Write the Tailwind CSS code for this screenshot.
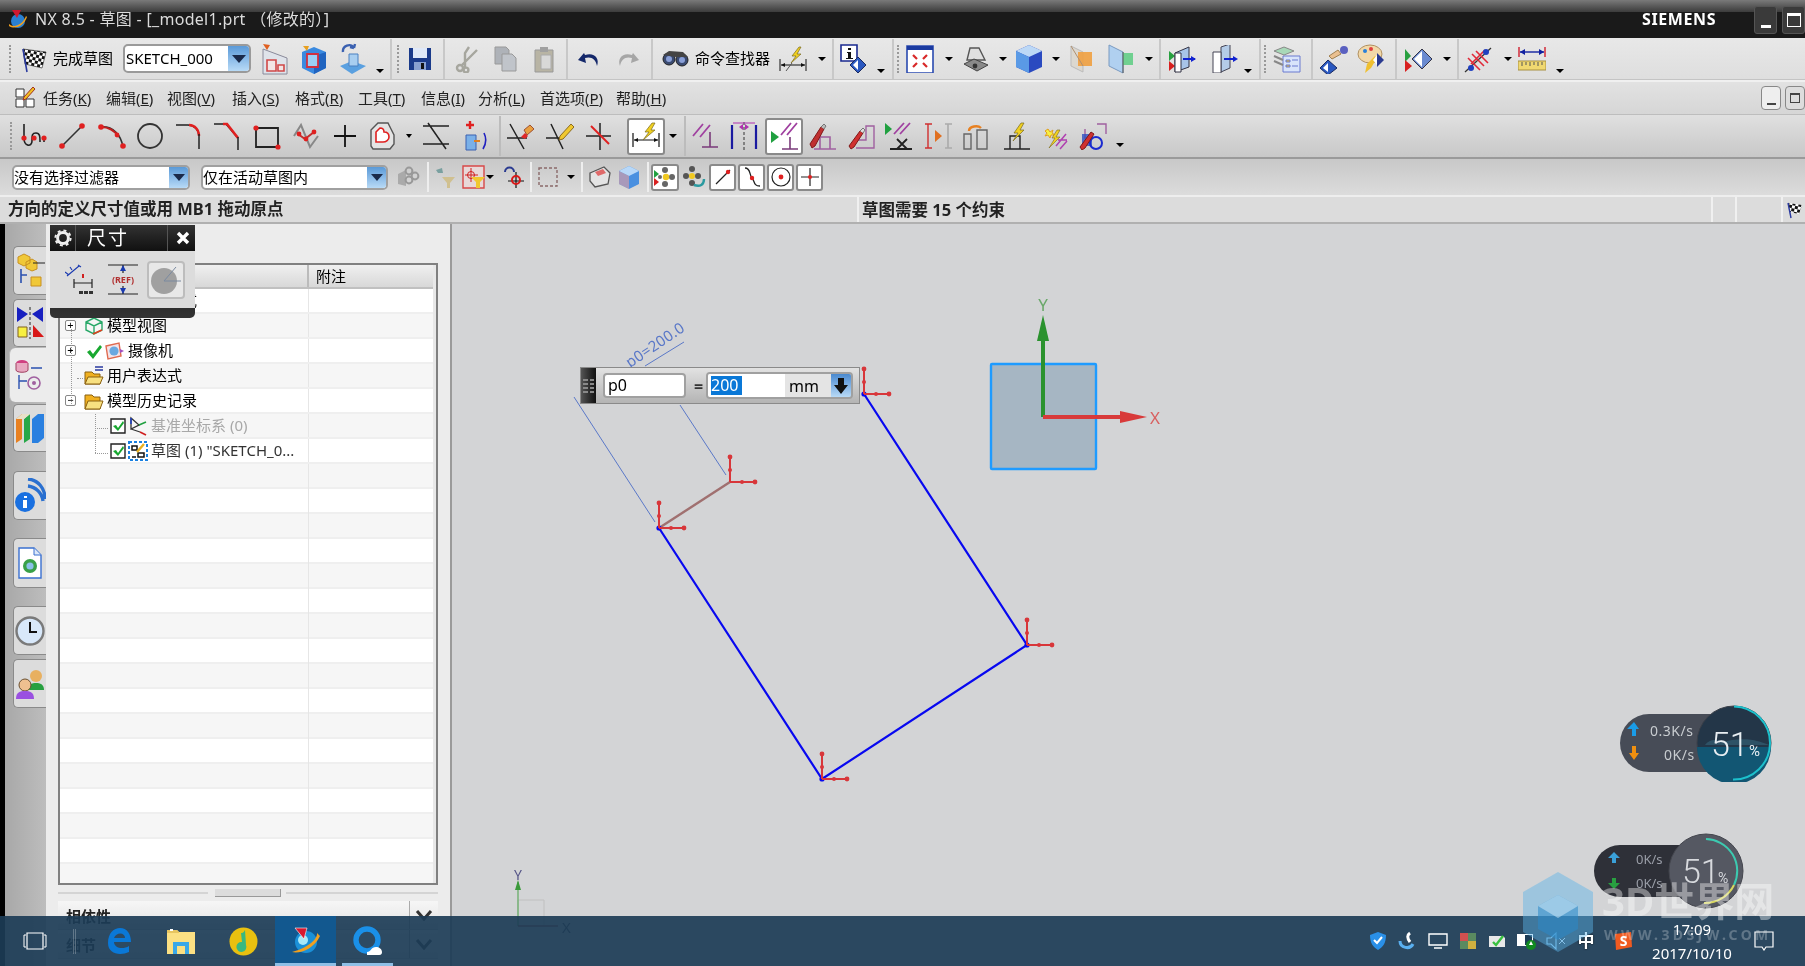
<!DOCTYPE html>
<html lang="zh">
<head>
<meta charset="UTF-8">
<title>NX 8.5 - 草图</title>
<script src="https://cdn.jsdelivr.net/npm/@tailwindcss/browser@4"></script>
</head>
<body class="m-0 overflow-hidden">
<div class="relative w-[1805px] h-[966px] overflow-hidden flex flex-col bg-[#d3d4d6] text-black blur-[0.5px] font-['Noto_Sans','Noto_Sans_CJK_SC',sans-serif]">

<svg class="absolute w-0 h-0">
  <defs>
    <pattern id="chk" width="6" height="6" patternUnits="userSpaceOnUse" patternTransform="rotate(12)">
      <rect width="6" height="6" fill="#fff"/><rect width="3" height="3" fill="#111"/><rect x="3" y="3" width="3" height="3" fill="#111"/>
    </pattern>
    <symbol id="mk" viewBox="0 -28 30 30" overflow="visible">
      <path d="M0 0V-25M0 0H25" stroke="#d8363a" stroke-width="2" fill="none"/>
      <circle cx="0" cy="-12" r="2" fill="#d8363a"/><circle cx="0" cy="-25" r="2.4" fill="#d8363a"/>
      <circle cx="12" cy="0" r="2" fill="#d8363a"/><circle cx="25" cy="0" r="2.4" fill="#d8363a"/>
    </symbol>
  </defs>
</svg>

<!-- title bar -->
<div class="h-[38px] shrink-0 flex flex-col bg-[#1a1a1a]">
  <div class="h-[12px] bg-gradient-to-b from-[#7a7a7a] to-[#3c3c3c]"></div>
</div>
<div class="absolute left-[8px] top-[6px] flex items-center h-[26px] text-[#dcdcdc] text-[16px] tracking-[0.3px]">
  <svg width="20" height="24" viewBox="0 0 20 24"><circle cx="10" cy="14" r="7" fill="#2a7fd0"/><path d="M1 17c4 4 13 2 17-8l1 1c-3 9-12 13-18 9z" fill="#f0a020"/><path d="M4 3h9l-4 8z" fill="#d01830"/></svg>
  <span class="ml-[7px]">NX 8.5 - 草图 - [_model1.prt （修改的）]</span>
</div>
<div class="absolute left-[1642px] top-[7px] text-white text-[16px] font-bold tracking-[0.6px]">SIEMENS</div>
<div class="absolute left-[1754px] top-[6px] flex gap-[5px]">
  <div class="w-[23px] h-[28px] rounded-[3px] border border-[#555] bg-[#3a3a3a] flex items-end justify-center pb-[5px]"><div class="w-[10px] h-[3px] bg-white"></div></div>
  <div class="w-[23px] h-[28px] rounded-[3px] border border-[#555] bg-[#3a3a3a] flex items-center justify-center"><div class="w-[14px] h-[14px] border border-t-[3px] border-white"></div></div>
</div>

<!-- toolbar 1 -->
<div class="h-[42px] shrink-0 flex items-center bg-gradient-to-b from-[#e8e8e8] to-[#dedede] border-b border-[#c4c4c4]">
  <div class="ml-[9px] w-[2px] h-[28px] border-l-2 border-dotted border-[#999]"></div>
  <svg class="ml-[9px]" width="28" height="28" viewBox="0 0 28 28"><path d="M3 4l23 3-4 16-17-4z" fill="url(#chk)" stroke="#222" stroke-width=".6"/><path d="M3 4l4 23" stroke="#2a3aa0" stroke-width="1.6"/></svg>
  <span class="ml-[5px] w-[60px] text-[15px] whitespace-nowrap">完成草图</span>
  <div class="ml-[10px] w-[128px] h-[29px] flex rounded-[5px] border-2 border-[#9a9a9a] bg-white overflow-hidden">
    <span class="flex-1 pl-[1px] text-[15px] leading-[25px]">SKETCH_000</span>
    <div class="w-[21px] bg-gradient-to-b from-[#5a9ad8] to-[#b8daf6] flex items-center justify-center"><div class="w-0 h-0 border-x-[7px] border-t-[8px] border-x-transparent border-t-[#1a2a4a]"></div></div>
  </div>
  <svg class="ml-[10px]" width="28" height="32" viewBox="0 0 28 32"><path d="M2 6l24 9v16H2z" fill="#dfe3ea" stroke="#8a8a9a"/><path d="M6 17h9v11H6zM17 22h6v6h-6z" fill="#f2e4e4" stroke="#d04848" stroke-width="1.6"/><path d="M2 1l7 1-3 5z" fill="#e06020"/></svg>
  <svg class="ml-[11px]" width="28" height="32" viewBox="0 0 28 32"><path d="M2 9l12-5 12 5v16l-12 6-12-6z" fill="#3a8ae0"/><path d="M14 13l12-4v16l-12 6z" fill="#2064c0"/><path d="M7 11h11v13H7z" fill="#9ad0f6" stroke="#d03040" stroke-width="1.8"/><path d="M3 3l6 0-2 5z" fill="#e8a020"/></svg>
  <svg class="ml-[11px]" width="28" height="32" viewBox="0 0 28 32"><path d="M1 23l12-5 14 5-14 8z" fill="#5aa0e0"/><path d="M10 11h9v12h-9z" fill="#a8cef0" stroke="#4a80c0"/><path d="M4 9a6 6 0 0111-4M15 5l-4-1M15 5l1-4" fill="none" stroke="#3a60b0" stroke-width="2.4"/></svg>
  <div class="ml-[9px] mt-[24px] w-0 h-0 border-x-[4px] border-t-[4px] border-x-transparent border-t-black"></div>
  <div class="ml-[6px] w-[2px] h-[40px] bg-[#c8c8c8]"></div>
  <div class="ml-[5px] w-[2px] h-[28px] border-l-2 border-dotted border-[#999]"></div>
  <svg class="ml-[7px]" width="28" height="28" viewBox="0 0 28 28"><path d="M3 3h22v22H3z" fill="#1a3a8a"/><path d="M7 3h14v10H7z" fill="#dfe8f8"/><path d="M8 17h12v8H8z" fill="#88a0d0"/><path d="M15 18h3v6h-3z" fill="#111"/></svg>
  <div class="ml-[9px] w-[2px] h-[40px] bg-[#c8c8c8]"></div>
  <svg class="ml-[7px]" width="28" height="28" viewBox="0 0 28 28"><g stroke="#a6a69e" fill="none" stroke-width="2.4"><circle cx="8" cy="23" r="3"/><circle cx="14" cy="25" r="2.4"/><path d="M10 20L25 5M13 22V8l4-6"/></g></svg>
  <svg class="ml-[11px]" width="28" height="28" viewBox="0 0 28 28"><path d="M4 2h11l3 3v14H4z" fill="#aeb2b8" stroke="#999"/><path d="M11 9h10l4 4v13H11z" fill="#c0c4ca" stroke="#999"/></svg>
  <svg class="ml-[11px]" width="28" height="28" viewBox="0 0 28 28"><path d="M5 5h18v22H5z" fill="#b8b4a4" stroke="#999"/><path d="M10 2h8v5h-8z" fill="#a0a0a0"/><path d="M11 10h10v14H11z" fill="#d8d8d8" stroke="#aaa"/></svg>
  <div class="ml-[8px] w-[2px] h-[40px] bg-[#c8c8c8]"></div>
  <svg class="ml-[7px]" width="28" height="28" viewBox="0 0 28 28"><path d="M9 8l-6 7 8 3-1-5c6-2 11 1 12 8 3-8-3-14-12-11z" fill="#14286a"/></svg>
  <svg class="ml-[11px]" width="28" height="28" viewBox="0 0 28 28"><path d="M19 8l6 7-8 3 1-5c-6-2-11 1-12 8-3-8 3-14 12-11z" fill="#a6a6a6"/></svg>
  <div class="ml-[9px] w-[2px] h-[40px] bg-[#c8c8c8]"></div>
  <svg class="ml-[8px]" width="28" height="28" viewBox="0 0 28 28"><circle cx="8" cy="14" r="6" fill="#3a4a70" stroke="#222"/><circle cx="21" cy="15" r="6" fill="#3a4a70" stroke="#222"/><circle cx="8" cy="14" r="3" fill="#8aa0d8"/><circle cx="21" cy="15" r="3" fill="#8aa0d8"/><path d="M2 10l6-4 14 1 5 5-12 0z" fill="#444"/></svg>
  <span class="ml-[6px] w-[75px] text-[15px] whitespace-nowrap">命令查找器</span>
  <svg class="ml-[9px]" width="28" height="28" viewBox="0 0 28 28"><path d="M1 14v12M27 14v12M2 20h24" stroke="#111" fill="none"/><path d="M2 20l4-2v4zM26 20l-4-2v4z" fill="#111"/><path d="M20 2l-7 9h4l-5 7 10-9h-4l4-7z" fill="#f0d020" stroke="#7a6a20" stroke-width=".7"/><path d="M13 18l-6 8" stroke="#555"/></svg>
  <div class="ml-[11px] w-0 h-0 border-x-[4px] border-t-[4px] border-x-transparent border-t-black"></div>
  <div class="ml-[6px] w-[2px] h-[40px] bg-[#c8c8c8]"></div>
  <svg class="ml-[6px]" width="28" height="32" viewBox="0 0 28 32"><path d="M1 2h16v16H1z" fill="#fff" stroke="#1a2a90" stroke-width="1.6"/><path d="M8 5h3v2H8zM7 9h4v6h2v1H6v-1h2v-5H7z" fill="#111"/><path d="M18 14l8 8-8 8-8-8z" fill="#2a58c0" stroke="#1a2a60"/><path d="M18 17v10l-5-5z" fill="#fff"/></svg>
  <div class="ml-[9px] mt-[24px] w-0 h-0 border-x-[4px] border-t-[4px] border-x-transparent border-t-black"></div>
  <div class="ml-[7px] w-[2px] h-[40px] bg-[#c8c8c8]"></div>
  <div class="ml-[3px] w-[2px] h-[28px] border-l-2 border-dotted border-[#999]"></div>
  <svg class="ml-[7px]" width="28" height="28" viewBox="0 0 28 28"><path d="M1 1h26v27H1z" fill="#fff" stroke="#2a4ab0" stroke-width="1.6"/><path d="M1 1h26v4H1z" fill="#1a3aa0"/><path d="M7 10l4 4M21 10l-4 4M7 22l4-4M21 22l-4-4" stroke="#d82828" stroke-width="2.2"/></svg>
  <div class="ml-[11px] w-0 h-0 border-x-[4px] border-t-[4px] border-x-transparent border-t-black"></div>
  <svg class="ml-[9px]" width="28" height="28" viewBox="0 0 28 28"><path d="M8 3h9l6 12H5z" fill="#e0e0e0" stroke="#555" stroke-width="1.4"/><path d="M2 19l10-5 14 6-11 6z" fill="#8a8a8a" stroke="#444"/><circle cx="13" cy="21" r="2.4" fill="#333"/></svg>
  <div class="ml-[9px] w-0 h-0 border-x-[4px] border-t-[4px] border-x-transparent border-t-black"></div>
  <svg class="ml-[8px]" width="28" height="30" viewBox="0 0 28 30"><path d="M1 7l13-6 13 6v16l-13 6-13-6z" fill="#2a4ac0"/><path d="M1 7l13-6 13 6-13 6z" fill="#bcd8f6"/><path d="M1 7l13 6v16l-13-6z" fill="#5a9ae6"/></svg>
  <div class="ml-[9px] w-0 h-0 border-x-[4px] border-t-[4px] border-x-transparent border-t-black"></div>
  <svg class="ml-[8px]" width="28" height="30" viewBox="0 0 28 30"><path d="M3 2l12 6v20L3 22z" fill="#dcd8d0" stroke="#bbb"/><path d="M10 8h14v14H10z" fill="#f0a040" opacity=".9"/><path d="M3 2l12 20" stroke="#b09070"/></svg>
  <svg class="ml-[11px]" width="28" height="30" viewBox="0 0 28 30"><path d="M2 1l14 7v21L2 22z" fill="#b0d0f0" stroke="#7a9ac0"/><path d="M16 9h10v12H16z" fill="#70d090"/><path d="M16 8v21" stroke="#555"/></svg>
  <div class="ml-[10px] w-0 h-0 border-x-[4px] border-t-[4px] border-x-transparent border-t-black"></div>
  <div class="ml-[6px] w-[2px] h-[40px] bg-[#c8c8c8]"></div>
  <svg class="ml-[7px]" width="28" height="28" viewBox="0 0 28 28"><path d="M1 6l6 5-6 5z" fill="#28a040"/><path d="M1 16l6 5-6 5z" fill="#d82020"/><path d="M7 8l14-6v20l-14 5z" fill="#a8c4e8" stroke="#334"/><path d="M7 8h6v19H7z" fill="#fff" stroke="#334"/><path d="M15 14h12" stroke="#1020d0" stroke-width="2"/><path d="M28 14l-5-3v6z" fill="#1020d0"/></svg>
  <svg class="ml-[14px]" width="28" height="28" viewBox="0 0 28 28"><path d="M11 2l9-3v24l-9 4z" fill="#b4cce8" stroke="#445"/><path d="M3 7h8v21H3z" fill="#fff" stroke="#445"/><path d="M14 14h12" stroke="#1020d0" stroke-width="2"/><path d="M28 14l-5-3v6z" fill="#1020d0"/></svg>
  <div class="ml-[6px] mt-[24px] w-0 h-0 border-x-[4px] border-t-[4px] border-x-transparent border-t-black"></div>
  <div class="ml-[7px] w-[2px] h-[40px] bg-[#c8c8c8]"></div>
  <div class="ml-[3px] w-[2px] h-[28px] border-l-2 border-dotted border-[#999]"></div>
  <svg class="ml-[7px]" width="28" height="28" viewBox="0 0 28 28"><path d="M10 11h17v16H10z" fill="#d8e4fa" stroke="#6a7ad0"/><path d="M13 15h4v2h-4zM19 15h6M13 20h4v2h-4zM19 21h6" stroke="#6a7ad0" fill="#e8c040"/><path d="M1 6l10-4 10 4-10 4z" fill="#a8d8b8" stroke="#888"/><path d="M1 11l9 4M1 16l9 4" stroke="#888" stroke-width="2"/></svg>
  <div class="ml-[10px] w-[2px] h-[40px] bg-[#c8c8c8]"></div>
  <svg class="ml-[7px]" width="28" height="30" viewBox="0 0 28 30"><path d="M9 12l9-6 3 4-9 5z" fill="#eac090" stroke="#a08050"/><circle cx="24" cy="6" r="4" fill="#5a60c0"/><path d="M8 16l9 8-9 7-8-7z" fill="#2a58c0" stroke="#1a2a60"/><path d="M8 19v9l-5-4z" fill="#fff"/></svg>
  <svg class="ml-[9px]" width="28" height="30" viewBox="0 0 28 30"><ellipse cx="13" cy="10" rx="12" ry="9" fill="#f2d8a8" stroke="#b09060"/><circle cx="8" cy="7" r="2" fill="#2a80d8"/><circle cx="14" cy="5" r="2" fill="#e04040"/><path d="M10 20l8-8 2 2-6 10-6 5z" fill="#f0c030"/><path d="M20 9l7 7-7 7z" fill="#2a3a90"/><path d="M20 11v10l-4-5z" fill="#fff"/></svg>
  <div class="ml-[10px] w-[2px] h-[40px] bg-[#c8c8c8]"></div>
  <svg class="ml-[8px]" width="28" height="28" viewBox="0 0 28 28"><path d="M0 4l6 7-6 6z" fill="#28a040"/><path d="M0 15l7 6-7 6z" fill="#d82020"/><path d="M17 4l10 10-10 10-10-10z" fill="#6a8ad0" stroke="#334"/><path d="M17 6v16l-8-8z" fill="#fff"/></svg>
  <div class="ml-[10px] w-0 h-0 border-x-[4px] border-t-[4px] border-x-transparent border-t-black"></div>
  <div class="ml-[6px] w-[2px] h-[40px] bg-[#c8c8c8]"></div>
  <svg class="ml-[5px]" width="28" height="30" viewBox="0 0 28 30"><path d="M1 28L27 4" stroke="#333" stroke-width="1.2"/><path d="M8 10l12 12M12 7l12 12M4 14l12 12M7 20l14-14" stroke="#e02838" stroke-width="1.6"/><circle cx="7" cy="24" r="3" fill="#2040c0"/><circle cx="22" cy="8" r="3" fill="#2040c0"/></svg>
  <div class="ml-[12px] w-0 h-0 border-x-[4px] border-t-[4px] border-x-transparent border-t-black"></div>
  <svg class="ml-[6px]" width="28" height="28" viewBox="0 0 28 28"><path d="M1 2v10M27 2v10" stroke="#d02030" stroke-width="1.4"/><path d="M2 7h24" stroke="#1020a0" stroke-width="1.4"/><path d="M2 7l5-3v6zM26 7l-5-3v6z" fill="#1020a0"/><path d="M0 16h28v9H0z" fill="#f0d870" stroke="#a89040"/><path d="M4 17v4M8 17v3M12 17v4M16 17v3M20 17v4M24 17v3" stroke="#555"/></svg>
  <div class="ml-[10px] mt-[24px] w-0 h-0 border-x-[4px] border-t-[4px] border-x-transparent border-t-black"></div>
</div>

<!-- menu -->
<div class="h-[35px] shrink-0 flex items-center bg-gradient-to-b from-[#e2e2e2] to-[#d6d6d6] border-t-2 border-[#f0f0f0] border-b border-b-[#bdbdbd] text-[15px] text-[#222]">
  <svg class="ml-[14px]" width="22" height="24" viewBox="0 0 22 24"><path d="M2 3h8v8H2zM2 13h8v8H2zM12 13h8v8h-8z" fill="#fff" stroke="#333"/><path d="M19 1l2 2-9 10-3 1 1-3z" fill="#f0c020" stroke="#a03020"/></svg>
  <span class="ml-[7px] w-[63px] whitespace-nowrap">任务(<u>K</u>)</span>
  <span class="w-[61px] whitespace-nowrap">编辑(<u>E</u>)</span>
  <span class="w-[65px] whitespace-nowrap">视图(<u>V</u>)</span>
  <span class="w-[63px] whitespace-nowrap">插入(<u>S</u>)</span>
  <span class="w-[63px] whitespace-nowrap">格式(<u>R</u>)</span>
  <span class="w-[63px] whitespace-nowrap">工具(<u>T</u>)</span>
  <span class="w-[57px] whitespace-nowrap">信息(<u>I</u>)</span>
  <span class="w-[62px] whitespace-nowrap">分析(<u>L</u>)</span>
  <span class="w-[76px] whitespace-nowrap">首选项(<u>P</u>)</span>
  <span class="whitespace-nowrap">帮助(<u>H</u>)</span>
  <div class="ml-auto flex gap-[4px]">
    <div class="w-[20px] h-[24px] rounded-[4px] border border-[#888] bg-[#eee] flex items-end justify-center pb-[4px]"><div class="w-[9px] h-[2px] bg-[#444]"></div></div>
    <div class="w-[20px] h-[24px] rounded-[4px] border border-[#888] bg-[#ddd] flex items-center justify-center"><div class="w-[10px] h-[10px] border border-t-2 border-[#444]"></div></div>
  </div>
</div>

<!-- toolbar 3 -->
<div class="h-[44px] shrink-0 flex items-center bg-gradient-to-b from-[#e0e0e0] to-[#c8c8c8] border-b-2 border-[#9a9a9a]">
  <div class="ml-[10px] w-[2px] h-[28px] border-l-2 border-dotted border-[#999]"></div>
  <svg class="ml-[8px]" width="28" height="28" viewBox="0 0 28 28"><path d="M4 2v14c0 9 8 9 8 3s0-8 4-8 4 4 4 8v1M24 14v6" fill="none" stroke="#222" stroke-width="1.6"/><g fill="#e02020"><circle cx="4" cy="16" r="2.6"/><circle cx="14" cy="16" r="2.6"/><circle cx="24" cy="16" r="2.6"/></g></svg>
  <svg class="ml-[10px]" width="28" height="28" viewBox="0 0 28 28"><path d="M4 24L24 4" stroke="#333" stroke-width="1.6"/><circle cx="4" cy="24" r="2.8" fill="#e02020"/><circle cx="24" cy="4" r="2.8" fill="#e02020"/></svg>
  <svg class="ml-[12px]" width="28" height="28" viewBox="0 0 28 28"><path d="M3 5c12-1 20 8 22 20" fill="none" stroke="#333" stroke-width="1.6"/><path d="M3 5c8 0 14 4 18 10" fill="none" stroke="#c02020" stroke-width="2"/><circle cx="3" cy="5" r="2.8" fill="#e02020"/><circle cx="25" cy="24" r="2.8" fill="#e02020"/><circle cx="19" cy="13" r="2.4" fill="#e02020"/></svg>
  <svg class="ml-[10px]" width="28" height="28" viewBox="0 0 28 28"><circle cx="14" cy="14" r="12" fill="none" stroke="#333" stroke-width="1.8"/></svg>
  <svg class="ml-[11px]" width="28" height="28" viewBox="0 0 28 28"><path d="M1 3h12c6 0 11 5 11 11" fill="none" stroke="#222" stroke-width="1.5"/><path d="M14 3c6 0 10 5 10 11" fill="none" stroke="#e02020" stroke-width="2.4"/><path d="M24 12v15" stroke="#222" stroke-width="1.5"/></svg>
  <svg class="ml-[10px]" width="28" height="28" viewBox="0 0 28 28"><path d="M1 2h12l11 13" fill="none" stroke="#222" stroke-width="1.5"/><path d="M10 2h4l11 14" fill="none" stroke="#e02020" stroke-width="2.6"/><path d="M25 15v13" stroke="#222" stroke-width="1.5"/></svg>
  <svg class="ml-[12px]" width="28" height="28" viewBox="0 0 28 28"><path d="M3 6h22v19H3z" fill="none" stroke="#222" stroke-width="1.8"/><circle cx="3" cy="6" r="2.6" fill="#e02020"/><circle cx="25" cy="25" r="2.6" fill="#e02020"/></svg>
  <svg class="ml-[11px]" width="28" height="28" viewBox="0 0 28 28"><path d="M2 14L9 3l9 22 8-11" fill="none" stroke="#888" stroke-width="2"/><path d="M6 12l7 5 9-7" fill="none" stroke="#c03030" stroke-width="2"/><g fill="#e02020"><circle cx="7" cy="12" r="2.4"/><circle cx="14" cy="17" r="2.4"/><circle cx="22" cy="10" r="2.4"/></g></svg>
  <svg class="ml-[11px]" width="28" height="28" viewBox="0 0 28 28"><path d="M14 3v22M3 14h22" stroke="#111" stroke-width="1.8"/></svg>
  <svg class="ml-[9px]" width="28" height="30" viewBox="0 0 28 30"><path d="M3 9l7-7h10l3 6 3 6v9l-4 5H5l-2-3z" fill="#e4e4e4" stroke="#555" stroke-width="1.4"/><path d="M8 11l4-4c2 0 4 1 4 4 4 0 5 3 5 5 0 3-3 5-6 5H8z" fill="#fff" stroke="#e02020" stroke-width="1.6"/></svg>
  <div class="ml-[10px] w-0 h-0 border-x-[3px] border-t-[4px] border-x-transparent border-t-black"></div>
  <svg class="ml-[10px]" width="28" height="28" viewBox="0 0 28 28"><path d="M1 4h26M1 22h26M6 1l18 26" stroke="#222" stroke-width="1.5"/></svg>
  <svg class="ml-[10px]" width="28" height="30" viewBox="0 0 28 30"><path d="M6 14h10v15H6z" fill="#7ab0e8" stroke="#3a60b0"/><path d="M6 4h8M10 0v8" stroke="#e02020" stroke-width="2.4"/><path d="M24 12c3 6 2 11-1 16" fill="none" stroke="#2020c0" stroke-width="1.6"/><path d="M14 20l6 0" stroke="#e08020" stroke-width="2"/></svg>
  <div class="ml-[11px] w-[2px] h-[40px] bg-[#bcbcbc]"></div>
  <svg class="ml-[6px]" width="28" height="28" viewBox="0 0 28 28"><path d="M3 2l14 25M0 16h20" stroke="#222" stroke-width="1.5"/><path d="M17 8l6-5 4 4-7 6z" fill="#e8a040" stroke="#a05030"/><path d="M14 15l4-4 3 3-3 3z" fill="#e02828"/></svg>
  <svg class="ml-[11px]" width="28" height="28" viewBox="0 0 28 28"><path d="M5 2l12 25M0 16h16" stroke="#222" stroke-width="1.5"/><path d="M14 14L25 2l3 3L17 17l-4 1z" fill="#f0c830" stroke="#8a6a20"/></svg>
  <svg class="ml-[11px]" width="28" height="28" viewBox="0 0 28 28"><path d="M15 1v27M1 14h25" stroke="#222" stroke-width="1.5"/><path d="M6 4l18 18" stroke="#e02020" stroke-width="2"/></svg>
  <div class="ml-[14px] w-[38px] h-[37px] rounded-[3px] border-2 border-[#8a8a8a] bg-white flex items-center justify-center">
    <svg width="30" height="30" viewBox="0 0 30 30"><path d="M2 12v14M28 12v14M3 19h24" stroke="#111" fill="none" stroke-width="1.2"/><path d="M3 19l4-2v4zM27 19l-4-2v4z" fill="#111"/><path d="M21 2l-7 9h4l-6 8 12-10h-4l4-7z" fill="#f0d020" stroke="#7a6a20" stroke-width=".7"/></svg>
  </div>
  <div class="ml-[4px] w-0 h-0 border-x-[4px] border-t-[4px] border-x-transparent border-t-black"></div>
  <div class="ml-[7px] w-[2px] h-[40px] bg-[#bcbcbc]"></div>
  <svg class="ml-[6px]" width="28" height="28" viewBox="0 0 28 28"><path d="M1 14L11 2M8 15L18 3" stroke="#a040a0" stroke-width="1.8"/><path d="M18 10v15M10 25h16" stroke="#7a3a7a" stroke-width="1.6"/></svg>
  <svg class="ml-[10px]" width="28" height="30" viewBox="0 0 28 30"><path d="M2 4v24M26 4v24" stroke="#1a1aa0" stroke-width="2.2"/><path d="M14 1v28" stroke="#333" stroke-dasharray="3 2"/><path d="M3 2h22" stroke="#b030b0"/><path d="M9 6l4-3v6zM19 6l-4-3v6z" fill="#b030b0"/></svg>
  <div class="ml-[7px] w-[38px] h-[37px] rounded-[3px] border-2 border-[#8a8a8a] bg-white flex items-center justify-center">
    <svg width="30" height="30" viewBox="0 0 30 30"><path d="M2 10l8 6-8 6z" fill="#20a040"/><path d="M12 14L22 2M18 14L28 2" stroke="#a040a0" stroke-width="1.8"/><path d="M21 16v12M13 28h16" stroke="#7a3a7a" stroke-width="1.6"/></svg>
  </div>
  <svg class="ml-[5px]" width="28" height="28" viewBox="0 0 28 28"><path d="M6 27h22M12 27V15h10v12" stroke="#a060a0" fill="none" stroke-width="1.6"/><path d="M2 22L13 5l3 2-9 17-3 2z" fill="#c03030" stroke="#801818"/><path d="M13 5l3-3 2 2-2 3" fill="#bbb" stroke="#777"/></svg>
  <svg class="ml-[11px]" width="28" height="28" viewBox="0 0 28 28"><path d="M9 26h18V4h-8v14H9" stroke="#a060a0" fill="none" stroke-width="1.4"/><path d="M2 24L13 9l3 2-9 14-3 2z" fill="#d03030" stroke="#801818"/><path d="M13 9l3-3 2 2-2 3" fill="#ddd" stroke="#777"/></svg>
  <svg class="ml-[10px]" width="28" height="28" viewBox="0 0 28 28"><path d="M0 1l7 6-7 6z" fill="#20a040"/><path d="M9 12L19 1M15 12L25 1" stroke="#a040a0" stroke-width="1.8"/><path d="M12 17l10 10M22 17L12 27M5 27h22" stroke="#222" stroke-width="1.8"/></svg>
  <svg class="ml-[11px]" width="28" height="28" viewBox="0 0 28 28"><path d="M4 2v24M1 2h7M1 26h7" stroke="#d03030" stroke-width="1.4"/><path d="M21 2h7M21 26h7M24 2v24" stroke="#aaa" stroke-width="1.6"/><path d="M11 8l7 6-7 6z" fill="#e07020"/></svg>
  <svg class="ml-[11px]" width="28" height="28" viewBox="0 0 28 28"><path d="M1 27V12h7v15H1zM14 27V8h10v19z" fill="none" stroke="#666" stroke-width="1.4"/><path d="M6 9c0-5 9-6 12-3" fill="none" stroke="#e88020" stroke-width="2.4"/></svg>
  <svg class="ml-[11px]" width="28" height="28" viewBox="0 0 28 28"><path d="M2 27h26M8 27V14h10v13" stroke="#222" fill="none" stroke-width="1.4"/><path d="M19 1l-7 10h4l-5 8 11-11h-4l4-7z" fill="#f0d020" stroke="#7a6a20" stroke-width=".7"/></svg>
  <svg class="ml-[10px]" width="28" height="28" viewBox="0 0 28 28"><path d="M8 7l2 3 3-2-1 3 3 2-4 0-1 3-2-3-3 1 2-3-2-2z" fill="#f8f040" stroke="#e0a020"/><path d="M17 8l-5 8h3l-6 10 11-11h-4l4-7z" fill="#f0d020" stroke="#7a6a20" stroke-width=".6"/><path d="M18 18h9M16 24L26 12M20 27l7-8" stroke="#b040b0" stroke-width="1.5"/></svg>
  <svg class="ml-[11px]" width="28" height="28" viewBox="0 0 28 28"><path d="M14 16h-8V7M18 2h9v10" stroke="#a060a0" fill="none" stroke-width="1.4"/><rect x="3" y="12" width="10" height="12" fill="#3050c0" opacity=".8"/><circle cx="17" cy="21" r="6" fill="none" stroke="#1a2ad0" stroke-width="2"/><path d="M1 25L12 10l3 2-9 14-3 2z" fill="#d03030" stroke="#801818"/></svg>
  <div class="ml-[9px] mt-[18px] w-0 h-0 border-x-[4px] border-t-[4px] border-x-transparent border-t-black"></div>
</div>

<!-- toolbar 4 -->
<div class="h-[38px] shrink-0 flex items-center bg-gradient-to-b from-[#c8c8c8] to-[#dcdcdc] border-b-2 border-[#eeeeee]">
  <div class="ml-[12px] w-[178px] h-[25px] flex rounded-[5px] border-2 border-[#a0a0a0] bg-white overflow-hidden">
    <span class="flex-1 text-[15px] leading-[21px] whitespace-nowrap">没有选择过滤器</span>
    <div class="w-[19px] bg-gradient-to-b from-[#5a9ad8] to-[#b8daf6] flex items-center justify-center"><div class="w-0 h-0 border-x-[6px] border-t-[7px] border-x-transparent border-t-[#1a2a4a]"></div></div>
  </div>
  <div class="ml-[11px] w-[187px] h-[25px] flex rounded-[5px] border-2 border-[#a0a0a0] bg-white overflow-hidden">
    <span class="flex-1 text-[15px] leading-[21px] whitespace-nowrap">仅在活动草图内</span>
    <div class="w-[19px] bg-gradient-to-b from-[#5a9ad8] to-[#b8daf6] flex items-center justify-center"><div class="w-0 h-0 border-x-[6px] border-t-[7px] border-x-transparent border-t-[#1a2a4a]"></div></div>
  </div>
  <svg class="ml-[8px]" width="24" height="24" viewBox="0 0 24 24"><path d="M2 9l8-4v16l-8-2z" fill="#aaa"/><circle cx="13" cy="6" r="3.4" fill="none" stroke="#999" stroke-width="2"/><circle cx="19" cy="11" r="3.4" fill="none" stroke="#999" stroke-width="2"/><circle cx="13" cy="15" r="3.4" fill="none" stroke="#999" stroke-width="2"/></svg>
  <div class="ml-[7px] w-[2px] h-[30px] bg-[#eee]"></div>
  <svg class="ml-[4px]" width="24" height="24" viewBox="0 0 24 24"><path d="M3 5l6-2 1 5H5z" fill="#7aa0a0"/><path d="M9 12h13l-5 6v5h-3v-5z" fill="#d0c090"/></svg>
  <svg class="ml-[5px]" width="24" height="24" viewBox="0 0 24 24"><path d="M1 1h21v22H1z" fill="#e8d8d8" stroke="#d84848" stroke-width="1.4"/><path d="M9 3v14M3 10h13" stroke="#d02020"/><circle cx="9" cy="10" r="3.5" fill="none" stroke="#d02020"/><path d="M9 12h14l-5 5v6h-4v-6z" fill="#f0c830"/></svg>
  <div class="w-0 h-0 border-x-[4px] border-t-[4px] border-x-transparent border-t-black"></div>
  <svg class="ml-[6px]" width="24" height="24" viewBox="0 0 24 24"><path d="M5 7c0-6 9-6 9 0" fill="none" stroke="#2a3a90" stroke-width="2"/><path d="M16 7v16M8 16h16" stroke="#111" stroke-width="1.2"/><circle cx="16" cy="15" r="4" fill="none" stroke="#d81818" stroke-width="2"/></svg>
  <div class="ml-[6px] w-[2px] h-[30px] bg-[#eee]"></div>
  <svg class="ml-[4px]" width="24" height="24" viewBox="0 0 24 24"><path d="M3 3h18v18H3z" fill="none" stroke="#8a6a6a" stroke-width="1.4" stroke-dasharray="3 2"/></svg>
  <div class="ml-[7px] w-0 h-0 border-x-[4px] border-t-[4px] border-x-transparent border-t-black"></div>
  <div class="ml-[6px] w-[2px] h-[30px] bg-[#eee]"></div>
  <svg class="ml-[5px]" width="24" height="24" viewBox="0 0 24 24"><path d="M2 8l14-6 6 6-2 11-13 3-5-6z" fill="#e4e4e4" stroke="#555" stroke-width="1.3"/><path d="M7 7l8-3 3 4-8 3z" fill="#e06a6a"/></svg>
  <svg class="ml-[5px]" width="24" height="24" viewBox="0 0 24 24"><path d="M2 6l10-5 10 5v13l-10 5-10-5z" fill="#4a90e0"/><path d="M2 6l10-5 10 5-10 5z" fill="#b8d8f8"/><path d="M2 6l10 5v13l-10-5z" fill="#e8a0a0" opacity=".6"/></svg>
  <div class="ml-[6px] w-[2px] h-[30px] bg-[#eee]"></div>
  <div class="ml-[2px] w-[28px] h-[27px] rounded-[3px] border-2 border-[#8a8a8a] bg-white flex items-center justify-center"><svg width="22" height="22" viewBox="0 0 22 22"><path d="M0 4l5 4-5 4z" fill="#20a040"/><path d="M0 12l5 4-5 4z" fill="#d82020"/><g fill="#666"><circle cx="11" cy="4" r="3"/><circle cx="11" cy="18" r="3"/><circle cx="18" cy="11" r="3"/><circle cx="6" cy="11" r="2"/></g><circle cx="12" cy="11" r="3.2" fill="#f0c820"/></svg></div>
  <svg class="ml-[3px]" width="24" height="24" viewBox="0 0 24 24"><g fill="#555"><circle cx="10" cy="4" r="3"/><circle cx="10" cy="18" r="3"/><circle cx="4" cy="11" r="3"/><circle cx="16" cy="11" r="3"/></g><circle cx="10" cy="11" r="3" fill="#f0c820"/><path d="M12 20c6 2 10 0 10-6" fill="none" stroke="#2a9aa0" stroke-width="2.4"/></svg>
  <div class="ml-[3px] w-[27px] h-[27px] rounded-[3px] border-2 border-[#8a8a8a] bg-white flex items-center justify-center"><svg width="20" height="20" viewBox="0 0 20 20"><path d="M3 17L17 3" stroke="#222" stroke-width="1.2"/><circle cx="15" cy="5" r="2.2" fill="#e02020"/></svg></div>
  <div class="ml-[2px] w-[27px] h-[27px] rounded-[3px] border-2 border-[#8a8a8a] bg-white flex items-center justify-center"><svg width="20" height="20" viewBox="0 0 20 20"><path d="M3 1c6 0 4 7 7 10s1 8 8 8" fill="none" stroke="#222" stroke-width="1.3"/><circle cx="10" cy="11" r="2.2" fill="#e02020"/></svg></div>
  <div class="ml-[2px] w-[27px] h-[27px] rounded-[3px] border-2 border-[#8a8a8a] bg-white flex items-center justify-center"><svg width="20" height="20" viewBox="0 0 20 20"><circle cx="10" cy="10" r="9" fill="none" stroke="#222" stroke-width="1.2"/><circle cx="10" cy="10" r="2.4" fill="#e02020"/></svg></div>
  <div class="ml-[2px] w-[27px] h-[27px] rounded-[3px] border-2 border-[#8a8a8a] bg-white flex items-center justify-center"><svg width="20" height="20" viewBox="0 0 20 20"><path d="M10 1v18M1 10h18" stroke="#222" stroke-width="1.2"/><circle cx="10" cy="10" r="2" fill="#e02020"/></svg></div>
</div>

<!-- status -->
<div class="h-[27px] shrink-0 flex items-center bg-[#dcdcdc] border-b-2 border-[#b0b0b0] text-[16.500px] font-bold text-[#222]">
  <span class="ml-[8px] w-[851px] border-r-2 border-[#f0f0f0] h-[25px] leading-[24px] whitespace-nowrap">方向的定义尺寸值或用 MB1 拖动原点</span>
  <span class="pl-[3px] w-[852px] leading-[24px] whitespace-nowrap">草图需要 15 个约束</span>
  <div class="w-[2px] h-[25px] bg-[#f0f0f0]"></div>
  <div class="ml-[22px] w-[2px] h-[25px] bg-[#f0f0f0]"></div>
  <div class="ml-[44px] w-[2px] h-[25px] bg-[#f0f0f0]"></div>
  <svg class="ml-[4px]" width="16" height="18" viewBox="0 0 16 18"><path d="M1 2l14 2-3 9-9-2z" fill="url(#chk)"/><path d="M1 2l3 15" stroke="#2a3aa0" stroke-width="1.4"/></svg>
</div>

<!-- main -->
<div class="flex-1 min-h-0 flex">
  <div class="w-[5px] bg-black"></div>
  <div class="w-[41px] bg-gradient-to-r from-[#a8a8a8] to-[#bdbdbd] flex flex-col items-end pt-[22px]">
    <div class="w-[33px] h-[49px] rounded-l-[5px] border border-r-0 border-[#8a8a8a] bg-[#dcdcdc] flex items-center justify-center"><svg width="30" height="36" viewBox="0 0 30 36"><path d="M3 4l6-3 6 3v6l-6 3-6-3zM11 9l6-3 5 3v7l-5 2-6-3z" fill="#f0c838" stroke="#c89020"/><path d="M6 16v14M6 22h6" stroke="#2a50b0" stroke-width="1.6"/><path d="M16 24h10v9H16z" fill="#f0c838" stroke="#c89020"/><path d="M18 10h12" stroke="#222"/></svg></div>
    <div class="mt-[4px] w-[33px] h-[48px] rounded-l-[5px] border border-r-0 border-[#8a8a8a] bg-[#dcdcdc] flex items-center justify-center"><svg width="30" height="36" viewBox="0 0 30 36"><path d="M2 2l11 7L2 17zM28 2L17 9l11 8z" fill="#1820c0"/><path d="M3 22h9v10H3z" fill="#f8f040" stroke="#806020"/><path d="M18 20l11 12H18z" fill="#d81818"/><path d="M15 2v32" stroke="#222" stroke-dasharray="3 2"/></svg></div>
    <div class="mt-[1px] w-[37px] h-[54px] rounded-l-[6px] bg-[#ececec] border-l border-[#bbb] flex items-center justify-center"><svg width="30" height="36" viewBox="0 0 30 36"><ellipse cx="9" cy="6" rx="6" ry="3" fill="#d04080"/><path d="M3 6v7c0 3 12 3 12 0V6" fill="#e8a8c0" stroke="#a04060"/><path d="M18 11h11M6 18v14M6 24h8" stroke="#2a50b0" stroke-width="1.4"/><circle cx="21" cy="26" r="6" fill="none" stroke="#a060a0" stroke-width="1.6"/><circle cx="21" cy="26" r="2" fill="#a060a0"/></svg></div>
    <div class="mt-[2px] w-[33px] h-[48px] rounded-l-[5px] border border-r-0 border-[#8a8a8a] bg-[#dcdcdc] flex items-center justify-center"><svg width="30" height="34" viewBox="0 0 30 34"><path d="M1 8l6-5v25l-6 4z" fill="#e88020"/><path d="M9 8l6-5v25l-6 4z" fill="#28a848"/><path d="M17 8l6-5h6v24l-6 5h-6z" fill="#2a80e0"/><path d="M1 8l6-5h8l-6 5z" fill="#e8e0c8"/></svg></div>
    <div class="mt-[19px] w-[33px] h-[49px] rounded-l-[5px] border border-r-0 border-[#8a8a8a] bg-[#dcdcdc] flex items-center justify-center"><svg width="32" height="36" viewBox="0 0 32 36"><circle cx="11" cy="24" r="10" fill="#1a70e0"/><path d="M10 18h3v2h-3zM9 22h4v8H9z" fill="#fff"/><path d="M14 8c8 1 14 7 15 15M14 1c10 1 17 9 17 20" fill="none" stroke="#2a70d0" stroke-width="3.4"/></svg></div>
    <div class="mt-[18px] w-[33px] h-[50px] rounded-l-[5px] border border-r-0 border-[#8a8a8a] bg-[#dcdcdc] flex items-center justify-center"><svg width="26" height="32" viewBox="0 0 26 32"><path d="M2 1h15l7 7v23H2z" fill="#fff" stroke="#3a70d0" stroke-width="1.4"/><path d="M17 1v7h7" fill="#dce8f8" stroke="#3a70d0"/><circle cx="13" cy="19" r="7" fill="#38a048"/><circle cx="13" cy="19" r="3.6" fill="#8ac0e8"/></svg></div>
    <div class="mt-[18px] w-[33px] h-[49px] rounded-l-[5px] border border-r-0 border-[#8a8a8a] bg-[#dcdcdc] flex items-center justify-center"><svg width="30" height="30" viewBox="0 0 30 30"><circle cx="15" cy="15" r="13.5" fill="#d8e8fa" stroke="#7a7a7a" stroke-width="2.4"/><path d="M15 6v10h7" fill="none" stroke="#111" stroke-width="2"/></svg></div>
    <div class="mt-[4px] w-[33px] h-[49px] rounded-l-[5px] border border-r-0 border-[#8a8a8a] bg-[#dcdcdc] flex items-center justify-center"><svg width="30" height="32" viewBox="0 0 30 32"><circle cx="21" cy="8" r="6" fill="#e8b060"/><path d="M13 22c0-6 4-7 8-7s8 1 8 7z" fill="#28a040"/><circle cx="10" cy="17" r="6" fill="#eec090" stroke="#6a5030"/><path d="M1 31c0-7 4-8 9-8s9 1 9 8z" fill="#9a50e0"/></svg></div>
  </div>

  <!-- part navigator -->
  <div class="w-[406px] bg-[#ececec] border-r-2 border-r-[#9a9a9a] pt-[39px] text-[15px]">
    <div class="relative ml-[12px] w-[380px] h-[622px] border-2 border-[#808080] flex flex-col bg-white">
      <div class="h-[24px] shrink-0 flex bg-gradient-to-b from-[#f0f0f0] to-[#d8d8d8] border-b-2 border-[#c0c0c0]">
        <div class="w-[249px] border-r-2 border-[#bbb]"></div>
        <div class="pl-[7px] leading-[22px]">附注</div>
      </div>
      <div class="h-[25px] shrink-0 flex bg-white border-b-2 border-[#efefef]"><div class="w-[249px] border-r border-[#e6e6e6] pl-[47px] leading-[22px] whitespace-nowrap">历史记录模式</div></div>
      <div class="h-[25px] shrink-0 flex bg-[#f6f6f6] border-b-2 border-[#efefef]"><div class="w-[249px] border-r border-[#e6e6e6] flex items-center pl-[5px]">
        <div class="w-[11px] h-[11px] rounded-[2px] border border-[#888] bg-white text-[11px] leading-[8px] text-center">+</div>
        <svg class="ml-[8px]" width="20" height="20" viewBox="0 0 20 20"><path d="M2 6l8-4 8 4v8l-8 4-8-4zM2 6l8 4 8-4M10 10v8" fill="none" stroke="#28a868" stroke-width="1.4"/><path d="M9 18l9-4" stroke="#e04020" stroke-width="1.6"/></svg>
        <span class="ml-[3px]">模型视图</span></div></div>
      <div class="h-[25px] shrink-0 flex bg-white border-b-2 border-[#efefef]"><div class="w-[249px] border-r border-[#e6e6e6] flex items-center pl-[5px]">
        <div class="w-[11px] h-[11px] rounded-[2px] border border-[#888] bg-white text-[11px] leading-[8px] text-center">+</div>
        <svg class="ml-[10px]" width="16" height="16" viewBox="0 0 16 16"><path d="M1 9l3-2 3 4 7-9 2 2-9 12z" fill="#18a830"/></svg>
        <svg class="ml-[3px]" width="20" height="20" viewBox="0 0 20 20"><path d="M1 5l13-3 2 13-13 3z" fill="#f4e4e8" stroke="#e06a50" stroke-width="1.4"/><circle cx="9" cy="10" r="4.6" fill="#6aa8e0"/><path d="M15 8l4 2-4 2z" fill="#a050c0"/></svg>
        <span class="ml-[3px]">摄像机</span></div></div>
      <div class="h-[25px] shrink-0 flex bg-[#f6f6f6] border-b-2 border-[#efefef]"><div class="w-[249px] border-r border-[#e6e6e6] flex items-center pl-[24px]">
        <svg width="20" height="20" viewBox="0 0 20 20"><path d="M1 6h7l2 2h6v10H1z" fill="#f0b020" stroke="#8a6010"/><path d="M4 11h15l-3 7H1z" fill="#f8e080" stroke="#8a6010"/><path d="M11 1h8M11 4h8" stroke="#2a3aa0" stroke-width="1.4"/></svg>
        <span class="ml-[3px]">用户表达式</span></div></div>
      <div class="h-[25px] shrink-0 flex bg-white border-b-2 border-[#efefef]"><div class="w-[249px] border-r border-[#e6e6e6] flex items-center pl-[5px]">
        <div class="w-[11px] h-[11px] rounded-[2px] border border-[#888] bg-white text-[11px] leading-[8px] text-center">−</div>
        <svg class="ml-[8px]" width="20" height="20" viewBox="0 0 20 20"><path d="M1 4h7l2 2h6v12H1z" fill="#f0b020" stroke="#8a6010"/><path d="M4 10h15l-3 8H1z" fill="#f8e080" stroke="#8a6010"/></svg>
        <span class="ml-[3px]">模型历史记录</span></div></div>
      <div class="h-[25px] shrink-0 flex bg-[#f6f6f6] border-b-2 border-[#efefef]"><div class="w-[249px] border-r border-[#e6e6e6] flex items-center pl-[50px]">
        <svg width="16" height="16" viewBox="0 0 16 16"><path d="M1 1h14v14H1z" fill="#fff" stroke="#222" stroke-width="1.4"/><path d="M3 8l3-1 2 3 5-7 1 2-6 8z" fill="#18a830"/></svg>
        <svg class="ml-[2px]" width="20" height="20" viewBox="0 0 20 20"><path d="M3 2v11l8-4-8-7zM3 13l9 3" fill="none" stroke="#333" stroke-width="1.3"/><path d="M3 2v6" stroke="#2040c0" stroke-width="1.6"/><path d="M11 9l7-3" stroke="#20a040" stroke-width="1.6"/><path d="M12 16l6 3" stroke="#d02020" stroke-width="1.6"/></svg>
        <span class="ml-[3px] text-[#a8a8a8] whitespace-nowrap">基准坐标系 (0)</span></div></div>
      <div class="h-[25px] shrink-0 flex bg-white border-b-2 border-[#efefef]"><div class="w-[249px] border-r border-[#e6e6e6] flex items-center pl-[50px]">
        <svg width="16" height="16" viewBox="0 0 16 16"><path d="M1 1h14v14H1z" fill="#fff" stroke="#222" stroke-width="1.4"/><path d="M3 8l3-1 2 3 5-7 1 2-6 8z" fill="#18a830"/></svg>
        <svg class="ml-[2px]" width="20" height="20" viewBox="0 0 20 20"><path d="M1 1h18v18H1z" fill="none" stroke="#1a80e0" stroke-width="2" stroke-dasharray="3 2"/><path d="M4 9V5h5v4zM10 16v-4h6v4zM4 16h4" fill="none" stroke="#111" stroke-width="1.5"/><path d="M9 11l7-8" stroke="#e8b020" stroke-width="2.4"/></svg>
        <span class="ml-[3px] text-[#333] whitespace-nowrap">草图 (1) "SKETCH_0...</span></div></div>
      <div class="flex-1 min-h-0 bg-[repeating-linear-gradient(to_bottom,#f6f6f6_0,#f6f6f6_23px,#efefef_23px,#efefef_25px,#fff_25px,#fff_48px,#efefef_48px,#efefef_50px)]"><div class="w-[249px] h-full border-r border-[#e6e6e6]"></div></div>
      <div class="absolute top-0 bottom-0 right-0 w-[3px] bg-[#e8e8e8]"></div>
      <!-- tree connectors -->
      <div class="absolute left-[11px] top-[64px] h-[75px] border-l border-dotted border-[#999]"></div>
      <div class="absolute left-[35px] top-[149px] h-[39px] border-l border-dotted border-[#999]"></div>
      <div class="absolute left-[35px] top-[163px] w-[13px] border-t border-dotted border-[#999]"></div>
      <div class="absolute left-[35px] top-[188px] w-[13px] border-t border-dotted border-[#999]"></div>
      <div class="absolute left-[17px] top-[113px] w-[8px] border-t border-dotted border-[#999]"></div>
    </div>
    <div class="ml-[12px] w-[380px] h-[16px] flex items-center">
      <div class="w-[150px] h-[2px] bg-[#d4d4d4]"></div>
      <div class="ml-[7px] w-[66px] h-[8px] bg-[#dcdcdc] border-b border-r border-[#999]"></div>
      <div class="ml-[5px] flex-1 h-[2px] bg-[#d4d4d4]"></div>
    </div>
    <div class="ml-[12px] w-[380px] h-[29px] flex bg-gradient-to-b from-[#f6f6f6] to-[#e4e4e4] border-b border-[#ccc] font-bold">
      <span class="flex-1 pl-[8px] leading-[31px] text-[#222]">相依性</span>
      <div class="w-[29px] border-l border-[#aaa] flex items-center justify-center"><svg width="18" height="12" viewBox="0 0 18 12"><path d="M2 2l7 8 7-8" fill="none" stroke="#333" stroke-width="3"/></svg></div>
    </div>
    <div class="ml-[12px] w-[380px] h-[29px] flex bg-gradient-to-b from-[#f6f6f6] to-[#e4e4e4] border-b border-[#ccc] font-bold">
      <span class="flex-1 pl-[8px] leading-[30px] text-[#222]">细节</span>
      <div class="w-[29px] border-l border-[#aaa] flex items-center justify-center"><svg width="18" height="12" viewBox="0 0 18 12"><path d="M2 2l7 8 7-8" fill="none" stroke="#333" stroke-width="3"/></svg></div>
    </div>
  </div>
  <div class="flex-1 bg-[#d3d4d6]"></div>
</div>

<!-- graphics window content -->
<svg class="absolute left-0 top-0" width="1805" height="966" viewBox="0 0 1805 966">
  <g stroke="#5a78c8" stroke-width="1" fill="none">
    <path d="M574 397L655 522M680 405L726 475M645 366L684 342"/>
  </g>
  <text x="0" y="0" transform="translate(630,368) rotate(-34)" font-size="15" fill="#5a78c8" font-family="Noto Sans" textLength="67">p0=200.0</text>
  <path d="M659 528L730 482" stroke="#a07070" stroke-width="2.4"/>
  <path d="M659 528L822 779L1027 645L864 394" stroke="#0808f0" stroke-width="2.2" fill="none"/>
  <circle cx="659" cy="528" r="2.6" fill="#0808f0"/><circle cx="864" cy="394" r="2.6" fill="#0808f0"/><circle cx="1027" cy="645" r="2.6" fill="#0808f0"/><circle cx="822" cy="779" r="2.6" fill="#0808f0"/>
  <use href="#mk" x="659" y="500" width="30" height="30"/>
  <use href="#mk" x="864" y="366" width="30" height="30"/>
  <use href="#mk" x="1027" y="617" width="30" height="30"/>
  <use href="#mk" x="822" y="751" width="30" height="30"/>
  <use href="#mk" x="730" y="454" width="30" height="30"/>
  <!-- WCS -->
  <rect x="991" y="364" width="105" height="105" rx="1" fill="#a6b6c3" stroke="#1e9bff" stroke-width="2.4"/>
  <path d="M1043 417V335" stroke="#2a922e" stroke-width="4"/><path d="M1043 315l-6 26h12z" fill="#2a922e"/>
  <path d="M1043 417H1125" stroke="#d83a3a" stroke-width="4"/><path d="M1147 417l-27-6v12z" fill="#d83a3a"/>
  <text x="1043" y="311" text-anchor="middle" font-size="17" fill="#6aa86a" font-family="Noto Sans">Y</text>
  <text x="1150" y="424" font-size="17" fill="#d86060" font-family="Noto Sans">X</text>
  <!-- small triad -->
  <path d="M518 900h26v26h-26z" fill="none" stroke="#c0c0c0"/>
  <path d="M518 926V882" stroke="#70b070" stroke-width="1.4"/><path d="M518 880l-3 10h6z" fill="#3a9a3a"/>
  <path d="M518 926H558" stroke="#a04040" stroke-width="1.6"/>
  <text x="518" y="880" text-anchor="middle" font-size="14" fill="#558" font-family="Noto Sans">Y</text>
  <text x="562" y="933" font-size="15" fill="#445" font-family="Noto Sans">X</text>
</svg>

<!-- on-screen input -->
<div class="absolute left-[580px] top-[367px] w-[280px] h-[37px] flex items-center border border-[#8a8a8a] bg-gradient-to-b from-[#e2e2e2] to-[#b4b4b4] text-[16px]">
  <div class="w-[15px] h-full bg-gradient-to-r from-[#555] to-[#111] grid grid-cols-2 gap-[2px] content-center px-[2px]">
    <i class="h-[2px] bg-[#888]"></i><i class="h-[2px] bg-[#888]"></i><i class="h-[2px] bg-[#888]"></i><i class="h-[2px] bg-[#888]"></i><i class="h-[2px] bg-[#888]"></i><i class="h-[2px] bg-[#888]"></i><i class="h-[2px] bg-[#888]"></i><i class="h-[2px] bg-[#888]"></i>
  </div>
  <div class="ml-[7px] w-[83px] h-[25px] rounded-[4px] border-2 border-[#a0a0a0] bg-white pl-[3px] leading-[20px]">p0</div>
  <span class="ml-[8px] w-[12px] font-bold text-[#333]">=</span>
  <div class="w-[147px] h-[27px] flex rounded-[4px] border-2 border-[#a0a0a0] overflow-hidden">
    <div class="w-[77px] bg-white pl-[3px] pt-[2px]"><span class="block w-[31px] h-[19px] bg-[#0a78d7] text-white leading-[19px]">200</span></div>
    <div class="flex-1 bg-[#e4e4e4] pl-[4px] leading-[24px]">mm</div>
    <div class="w-[20px] bg-gradient-to-b from-[#4a8ad0] to-[#b8daf6] flex items-center justify-center"><svg width="14" height="16" viewBox="0 0 14 16"><path d="M4 0h6v7h4l-7 9-7-9h4z" fill="#111"/></svg></div>
  </div>
</div>

<!-- dimension popup -->
<div class="absolute left-[50px] top-[225px] w-[145px] h-[93px] flex flex-col rounded-b-[5px] bg-gradient-to-b from-[#111] to-[#333] overflow-hidden">
  <div class="h-[26px] flex items-center text-white bg-gradient-to-b from-[#333] to-[#111]">
    <div class="w-[26px] h-full flex items-center justify-center border-r border-[#555]"><svg width="18" height="18" viewBox="0 0 18 18"><circle cx="9" cy="9" r="5.4" fill="none" stroke="#eee" stroke-width="3"/><circle cx="9" cy="9" r="7.6" fill="none" stroke="#eee" stroke-width="2" stroke-dasharray="3 3"/></svg></div>
    <span class="ml-[11px] w-[81px] text-[19px] leading-none tracking-[2px] border-r border-[#555] h-full flex items-center">尺寸</span>
    <svg class="ml-[8px]" width="14" height="14" viewBox="0 0 14 14"><path d="M2 2l10 10M12 2L2 12" stroke="#fff" stroke-width="3.4"/></svg>
  </div>
  <div class="h-[57px] flex items-center bg-[#dcdcdc]">
    <svg class="ml-[15px]" width="30" height="32" viewBox="0 0 30 32"><path d="M2 12L14 2M5 3l2 3M0 8l4 3M13 1l3 2" stroke="#1a3ab0" stroke-width="1.1" fill="none"/><path d="M9 24V15M27 24V15M9 19h18" stroke="#222" stroke-width="1.2" fill="none"/><path d="M18 10v4" stroke="#d02020" stroke-width="2"/><path d="M14 27h4v3h-4zM19 27h4v3h-4zM24 27h4v3h-4z" fill="#333"/></svg>
    <svg class="ml-[12px]" width="32" height="34" viewBox="0 0 32 34"><path d="M1 2h30M1 31h30M16 2v8M16 23v8" stroke="#222" stroke-width="1.2"/><path d="M16 2l-3 6h6zM16 31l-3-6h6z" fill="#1a3ab0"/><text x="16" y="20" text-anchor="middle" font-size="9" font-weight="700" fill="#b03030" font-family="Noto Sans">(REF)</text></svg>
    <div class="ml-[8px] w-[38px] h-[38px] rounded-[4px] border-2 border-[#bdbdbd] bg-[#e8e8e8] flex items-center justify-center"><svg width="32" height="32" viewBox="0 0 32 32"><circle cx="14" cy="17" r="13" fill="#a0a0a0"/><path d="M14 17L26 3M14 17h17" stroke="#7a8aa0"/></svg></div>
  </div>
</div>

<!-- net widgets -->
<div class="absolute left-[1620px] top-[714px] w-[100px] h-[58px] rounded-l-[29px] bg-[#474c57] text-[#c8ccd0] text-[14px] flex flex-col justify-center pl-[30px] gap-[6px] leading-[18px]">
  <span class="tracking-[0.5px]">0.3K/s</span><span class="pl-[14px] tracking-[0.5px]">0K/s</span>
</div>
<svg class="absolute left-[1620px] top-[718px]" width="20" height="52" viewBox="0 0 20 52"><path d="M14 4l5 7h-3v7h-4v-7H7z" fill="#1a9ce8"/><path d="M12 28h4v7h3l-5 7-5-7h3z" fill="#f09010"/></svg>
<svg class="absolute left-[1695px] top-[704px]" width="78" height="78" viewBox="0 0 78 78">
  <circle cx="39" cy="39" r="37" fill="#233648" stroke="#3a3f48" stroke-width="1"/>
  <path d="M10 41c4-6 12-6 18-3 8-3 26-4 34-1 4 1 8 2 12 4z" fill="#2e5266"/>
  <path d="M2 43a37 37 0 0074 0z" fill="#125673"/>
  <path d="M39 2.500a36.500 36.500 0 01-1 73" fill="none" stroke="#1cc0cc" stroke-width="2"/>
  <text x="16" y="52" font-size="34" fill="#e8eef2" font-family="Roboto" font-weight="300">51</text>
  <text x="54" y="52" font-size="15" fill="#e8eef2" font-family="Roboto">%</text>
</svg>
<div class="absolute left-[1594px] top-[845px] w-[90px] h-[52px] rounded-l-[26px] bg-[#2e3038] text-[#9a9ea8] text-[13px] flex flex-col justify-center pl-[42px] gap-[6px] leading-[18px]">
  <span>0K/s</span><span>0K/s</span>
</div>
<svg class="absolute left-[1606px] top-[850px]" width="16" height="44" viewBox="0 0 16 44"><path d="M8 2l6 6h-4v5H6V8H2z" fill="#3aa0d8"/><path d="M6 28h4v5h4l-6 6-6-6h4z" fill="#28a040"/></svg>
<svg class="absolute left-[1668px] top-[833px]" width="76" height="76" viewBox="0 0 76 76">
  <circle cx="38" cy="38" r="37" fill="#555862" stroke="#44464e"/>
  <path d="M38 6a32 32 0 0128 46" fill="none" stroke="#3ccab0" stroke-width="2"/>
  <path d="M66 52a32 32 0 01-30 18" fill="none" stroke="#d8d860" stroke-width="2"/>
  <text x="14" y="50" font-size="34" fill="#d8dade" font-family="Roboto" font-weight="300">51</text>
  <text x="50" y="50" font-size="14" fill="#d8dade" font-family="Roboto">%</text>
</svg>

<!-- taskbar -->
<div class="absolute left-0 bottom-0 w-full h-[50px] flex items-center bg-[#1c3c56]/92 text-white">
  <svg class="ml-[23px]" width="24" height="18" viewBox="0 0 24 18"><path d="M4 1h16v16H4z" fill="none" stroke="#fff" stroke-width="1.2"/><path d="M3 3H1v12h2M21 3h2v12h-2" fill="none" stroke="#fff"/></svg>
  <div class="ml-[26px] w-[3px] h-[25px] border-x border-[#ffffff]/25"></div>
  <svg class="ml-[31px]" width="24" height="28" viewBox="0 0 24 28"><path d="M1 16C1 6 7 1 13 1c7 0 11 6 11 14H7c0 6 9 8 15 4v6c-9 4-21 2-21-9zM7 11h11c0-6-9-6-11 0z" fill="#0a78d7"/></svg>
  <svg class="ml-[36px]" width="28" height="26" viewBox="0 0 28 26"><path d="M0 2h10l2 2h16v22H0z" fill="#fce083"/><path d="M0 2h10l2 2v1H0z" fill="#e8c560"/><path d="M6 14h16v12h-4v-8H10v8H6z" fill="#3aa8e8"/><path d="M3 1h3v2H3z" fill="#fff"/></svg>
  <svg class="ml-[34px]" width="29" height="29" viewBox="0 0 29 29"><circle cx="14.500" cy="14.500" r="14" fill="#e8c010"/><path d="M16 3l1 15a5 5 0 11-4-3l-1-9c3 0 3-2 4-3z" fill="#38b880"/></svg>
  <div class="ml-[17px] relative w-[61px] h-full bg-[#12588f] flex items-center justify-center">
    <svg width="30" height="30" viewBox="0 0 30 30"><circle cx="15" cy="16" r="11" fill="#1a90d8"/><circle cx="12" cy="14" r="5" fill="#a8e8f8"/><path d="M1 26c8 2 22-3 28-16l-3-3c1 7-12 16-25 19z" fill="#f0a020"/><path d="M4 2h12l-3 11z" fill="#d81830" stroke="#fff" stroke-width=".6"/></svg>
    <div class="absolute left-0 bottom-0 w-full h-[3px] bg-[#8fbfe6]"></div>
  </div>
  <div class="ml-[6px] relative w-[51px] h-full flex items-center justify-center">
    <svg width="30" height="30" viewBox="0 0 30 30"><circle cx="14" cy="14" r="11" fill="none" stroke="#1a90e8" stroke-width="5.400"/><path d="M14 26c4 0 4-5 9-5 3 0 6 2 6 5s-2 3-4 3H14z" fill="#fff"/></svg>
    <div class="absolute left-0 bottom-0 w-full h-[3px] bg-[#8fbfe6]"></div>
  </div>
  <svg class="ml-[975px]" width="20" height="20" viewBox="0 0 20 20"><path d="M10 1l8 3c0 8-3 12-8 15C5 16 2 12 2 4z" fill="#2a90e8"/><path d="M6 9l3 3 5-6" fill="none" stroke="#fff" stroke-width="2"/></svg>
  <svg class="ml-[9px]" width="20" height="20" viewBox="0 0 20 20"><path d="M3 10c0 7 10 9 13 3" fill="none" stroke="#5ab0f0" stroke-width="3"/><path d="M13 2c-3 2-3 5 0 9" fill="none" stroke="#fff" stroke-width="3"/></svg>
  <svg class="ml-[11px]" width="20" height="20" viewBox="0 0 20 20"><path d="M1 3h18v11H1zM6 17h8" fill="none" stroke="#fff" stroke-width="1.4"/></svg>
  <svg class="ml-[10px]" width="20" height="20" viewBox="0 0 20 20"><path d="M2 2h16v16H2z" fill="#5a8a60"/><path d="M2 2h8v8H2z" fill="#d05050"/><path d="M10 10h8v8h-8z" fill="#d0b040"/></svg>
  <svg class="ml-[9px]" width="20" height="20" viewBox="0 0 20 20"><path d="M2 5h14l2 2v9H2z" fill="#e8e8e8"/><path d="M6 11l3 3 7-9" fill="none" stroke="#38c040" stroke-width="2.4"/></svg>
  <svg class="ml-[10px]" width="20" height="20" viewBox="0 0 20 20"><path d="M0 3h16v12H0z" fill="#fff"/><path d="M8 4h7v10H8z" fill="#1c3c56"/><circle cx="14" cy="14" r="5" fill="#108a20"/><path d="M14 10l2 4h-4z" fill="#fff"/></svg>
  <svg class="ml-[9px]" width="20" height="20" viewBox="0 0 20 20"><path d="M1 7h4l5-5v16l-5-5H1z" fill="none" stroke="#7fc0e8" stroke-width="1.1"/><path d="M13 7l6 6M19 7l-6 6" stroke="#a8cce8" stroke-width="1"/></svg>
  <span class="ml-[10px] w-[20px] text-[17px] font-bold text-center [text-shadow:0_0_2px_#000]">中</span>
  <svg class="ml-[17px]" width="20" height="20" viewBox="0 0 20 20"><path d="M2 3l16-2 1 15-16 3z" fill="#f05a20"/><text x="10.500" y="15" text-anchor="middle" font-size="14" font-weight="700" fill="#fff" font-family="Noto Sans">S</text></svg>
  <div class="ml-[9px] w-[100px] text-center text-[15px] leading-[24px]">
    <div>17:09</div>
    <div>2017/10/10</div>
  </div>
  <svg class="ml-[12px]" width="20" height="20" viewBox="0 0 20 20"><path d="M1 1h18v15h-7l-2 3-2-3H1z" fill="none" stroke="#fff" stroke-width="1.2"/></svg>
</div>

<!-- watermark -->
<svg class="absolute left-[1522px] top-[871px]" width="72" height="82" viewBox="0 0 72 82"><path d="M36 1l35 20v40L36 81 1 61V21z" fill="#5ab4e8" opacity=".45"/><path d="M36 24l20 11v23L36 69 16 58V35z" fill="#2a88c8" opacity=".55"/><path d="M36 24l20 11-20 12-20-12z" fill="#d0eaf8" opacity=".55"/></svg>
<div class="absolute left-[1602px] top-[878px] text-white/40 text-[40px] leading-[46px] font-bold whitespace-nowrap">3D世界网</div>
<div class="absolute left-[1604px] top-[926px] text-white/25 text-[14px] leading-[18px] font-bold tracking-[3.4px] whitespace-nowrap">WWW.3DSJW.COM</div>

</div>
</body>
</html>
